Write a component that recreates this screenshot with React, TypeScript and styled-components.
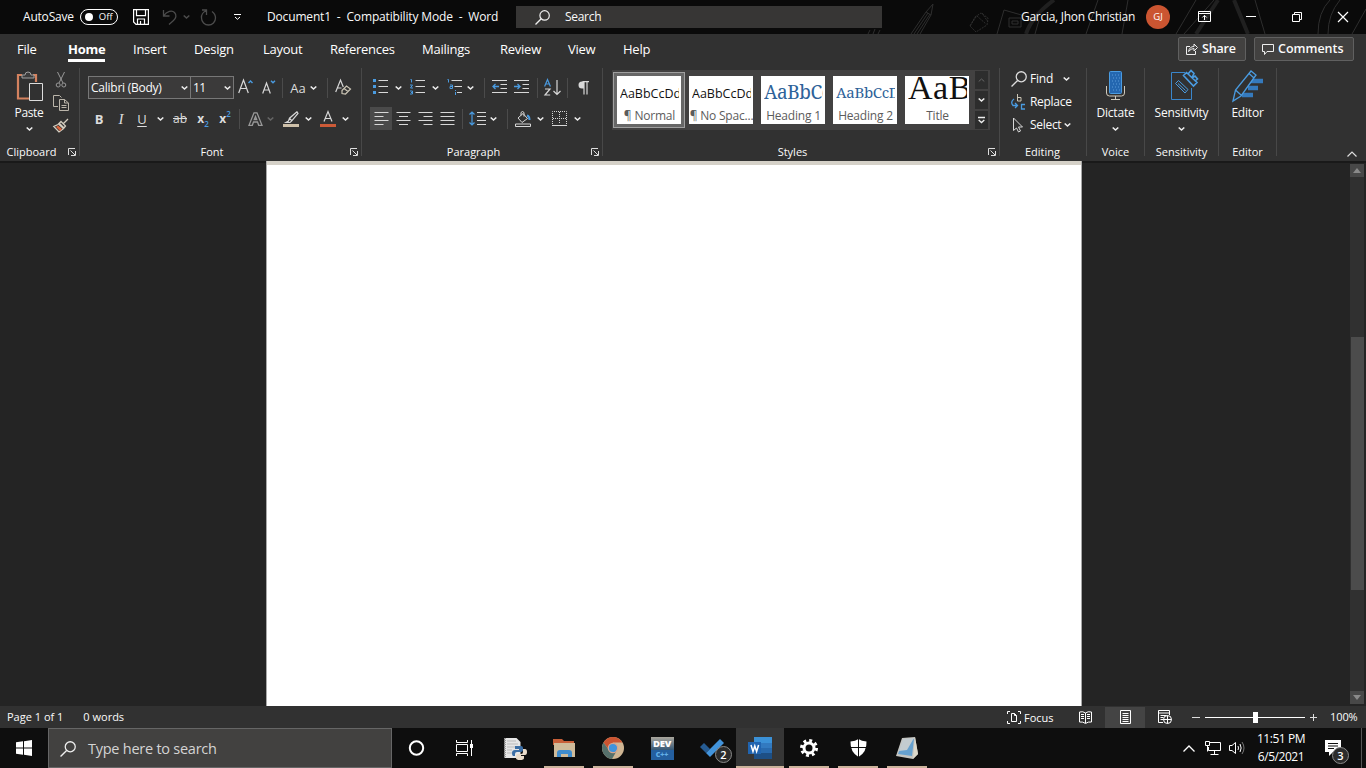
import React from 'react';
import styled, { createGlobalStyle } from 'styled-components';

const GlobalStyle = createGlobalStyle`
    * {
        box-sizing: border-box;
    }

    body {
        margin: 0;
        overflow: hidden;
        background: #242424;
        color: #fff;
        font-family: "Open Sans", "Noto Sans", sans-serif;
        font-size: 12px;
    }
`;

const Screen = styled.div`
    display: flex;
    flex-direction: column;
    width: 1366px;
    height: 768px;
`;

const Label = styled.span<{ $size?: number; $spacing?: number; $gap?: number; $weight?: number; $color?: string }>`
    flex: none;
    white-space: pre;
    line-height: 16px;
    font-size: ${p => p.$size ?? 12}px;
    font-weight: ${p => p.$weight ?? 400};
    letter-spacing: ${p => p.$spacing ?? 0}px;
    margin-left: ${p => p.$gap ?? 0}px;
    color: ${p => p.$color ?? '#fafafa'};
`;

const Cell = styled.div<{ $w: number; $gap?: number; $active?: boolean }>`
    flex: none;
    display: flex;
    align-items: center;
    justify-content: center;
    width: ${p => p.$w}px;
    height: 23px;
    margin-left: ${p => p.$gap ?? 0}px;
    background: ${p => (p.$active ? '#4a4a4a' : 'transparent')};
`;

const Divider = styled.div<{ $gap: number }>`
    flex: none;
    width: 1px;
    height: 20px;
    margin-left: ${p => p.$gap}px;
    background: #4b4b4b;
`;

const Svg = styled.svg`
    display: block;
    flex: none;
    fill: none;
    stroke: #d8d8d8;
    overflow: visible;
`;

type IconProps = {
    w: number;
    h: number;
    children: React.ReactNode;
}

const Icon: React.FC<IconProps> = ({ w, h, children }) => (
    <Svg width={w} height={h} viewBox={`0 0 ${w} ${h}`}>{children}</Svg>
);

const Chevron: React.FC<{ color?: string }> = ({ color = '#eee' }) => (
    <Icon w={7} h={4}>
        <path d="M.7.5 3.5 3 6.300.5" stroke={color} strokeWidth="1.6" />
    </Icon>
);

/* ---------- title bar ---------- */

const TitleBar = styled.header`
    position: relative;
    display: flex;
    align-items: center;
    height: 34px;
    padding-bottom: 1px;
    background: #0a0a0a;
`;

const Doodles = styled.svg`
    position: absolute;
    right: 0;
    top: 0;
    fill: none;
    stroke: #2e2e2e;
`;

const TitleGroup = styled.div<{ $w: number; $left?: number }>`
    position: relative;
    flex: none;
    display: flex;
    align-items: center;
    width: ${p => p.$w}px;
    height: 100%;
    padding-left: ${p => p.$left ?? 0}px;
`;

const Toggle = styled.div`
    display: flex;
    align-items: center;
    width: 38px;
    height: 16px;
    padding-left: 4px;
    border: 1px solid #fff;
    border-radius: 8px;
`;

const Knob = styled.div`
    width: 8px;
    height: 8px;
    border-radius: 50%;
    background: #fff;
`;

const SearchBox = styled.div`
    position: relative;
    flex: none;
    display: flex;
    align-items: center;
    width: 366px;
    height: 22px;
    padding-left: 19px;
    margin-top: 1px;
    background: #373635;
`;

const Avatar = styled.div`
    display: flex;
    align-items: center;
    justify-content: center;
    width: 24px;
    height: 24px;
    margin-left: 11px;
    border-radius: 50%;
    background: #cb5531;
    font-size: 9.5px;
`;

/* ---------- tabs ---------- */

const TabBar = styled.nav`
    display: flex;
    height: 32px;
    padding-left: 17px;
    background: #313131;
`;

const TabSlot = styled.div<{ $w: number }>`
    flex: none;
    width: ${p => p.$w}px;
    padding-top: 7px;
`;

const Tab = styled.div<{ $active?: boolean }>`
    display: inline-block;
    height: 21px;
    line-height: 17px;
    font-size: 13px;
    letter-spacing: -0.25px;
    font-weight: ${p => (p.$active ? 700 : 400)};
    border-bottom: 3px solid ${p => (p.$active ? '#fff' : 'transparent')};
`;

const TabActions = styled.div`
    display: flex;
    gap: 8px;
    margin: 3px 12px 0 auto;
`;

const ActionButton = styled.div<{ $w: number }>`
    display: flex;
    align-items: center;
    width: ${p => p.$w}px;
    height: 24px;
    padding-left: 7px;
    border: 1px solid #606060;
    border-radius: 2px;
    background: #424140;
`;

/* ---------- ribbon ---------- */

const Ribbon = styled.section`
    display: flex;
    height: 95px;
    background: #313131;
`;

const Group = styled.div<{ $w: number }>`
    position: relative;
    flex: none;
    display: flex;
    flex-direction: column;
    width: ${p => p.$w}px;

    &::after {
        content: '';
        position: absolute;
        right: 0;
        top: 2px;
        width: 1px;
        height: 88px;
        background: #484848;
    }
`;

const GroupBody = styled.div`
    height: 78px;
`;

const GroupFooter = styled.div<{ $right?: number }>`
    display: flex;
    align-items: center;
    justify-content: center;
    height: 16px;
    padding-right: ${p => p.$right ?? 0}px;
`;

const Launcher = styled.div<{ $right: number }>`
    position: absolute;
    right: ${p => p.$right}px;
    bottom: 5px;
`;

const ToolRow = styled.div<{ $top: number; $left: number }>`
    display: flex;
    align-items: center;
    height: 23px;
    margin-top: ${p => p.$top}px;
    padding-left: ${p => p.$left}px;
`;

const Combo = styled.div<{ $w: number }>`
    flex: none;
    display: flex;
    align-items: center;
    justify-content: space-between;
    width: ${p => p.$w}px;
    height: 23px;
    padding: 0 2px;
    border: 1px solid #777;
    background: #3b3a3a;

    & + & {
        border-left: 0;
    }
`;

const Glyph = styled.span<{ $size: number; $weight?: number; $italic?: boolean; $line?: string; $serif?: boolean }>`
    font-family: ${p => (p.$serif ? '"Liberation Serif", serif' : '"Open Sans", sans-serif')};
    font-size: ${p => p.$size}px;
    line-height: 20px;
    font-weight: ${p => p.$weight ?? 400};
    font-style: ${p => (p.$italic ? 'italic' : 'normal')};
    text-decoration: ${p => p.$line ?? 'none'};
    text-underline-offset: 2px;
    color: #dcdcdc;
    white-space: nowrap;
`;

const Mini = styled.span<{ $shift: number }>`
    position: relative;
    top: ${p => p.$shift}px;
    font-size: 8px;
    line-height: 8px;
    font-weight: 600;
    color: #4a9be0;
`;

const Columns = styled.div`
    display: flex;
    padding-left: 8px;
`;

const Column = styled.div<{ $w: number; $top?: number; $gap?: number }>`
    flex: none;
    display: flex;
    flex-direction: column;
    align-items: center;
    width: ${p => p.$w}px;
    padding-top: ${p => p.$top ?? 0}px;
    gap: ${p => p.$gap ?? 0}px;
`;

const BigButton = styled.div<{ $right?: number }>`
    display: flex;
    flex-direction: column;
    align-items: center;
    padding: 4px ${p => p.$right ?? 0}px 0 0;
`;

const BigIcon = styled.div<{ $h?: number }>`
    display: flex;
    justify-content: center;
    height: ${p => p.$h ?? 35}px;
`;

const BigChevron = styled.div`
    margin-top: 6px;
`;

const Gallery = styled.div`
    display: flex;
    width: 378px;
    height: 60px;
    margin: 4px 0 0 9px;
    background: #424141;
`;

const StyleCard = styled.div<{ $active?: boolean }>`
    flex: none;
    display: flex;
    width: 72px;
    height: 56px;
    margin-top: 2px;
    padding: 3px;
    border: 1px solid ${p => (p.$active ? '#a0a0a0' : 'transparent')};
    background: ${p => (p.$active ? '#676767' : 'transparent')};

    &:first-child {
        margin-left: 1px;
    }
`;

const CardFace = styled.div`
    display: flex;
    flex-direction: column;
    width: 64px;
    height: 48px;
    padding: 1px 2px 0 3px;
    background: #fff;
`;

const Sample = styled.div<{ $size: number; $font: string; $color: string; $line: number; $spacing: number }>`
    height: 32px;
    overflow: hidden;
    white-space: nowrap;
    color: ${p => p.$color};
    font-family: ${p => p.$font};
    font-size: ${p => p.$size}px;
    line-height: ${p => p.$line}px;
    letter-spacing: ${p => p.$spacing}px;
`;

const CardName = styled.div`
    margin: 0 -3px;
    text-align: center;
    font-size: 12px;
    line-height: 17px;
    letter-spacing: -0.2px;
    white-space: nowrap;
    color: #5c5c5c;
`;

const GalleryNav = styled.div`
    display: flex;
    flex-direction: column;
    justify-content: space-between;
    width: 13px;
    margin-left: 2px;
    padding: 1px 0;
`;

const NavButton = styled.div`
    display: flex;
    align-items: center;
    justify-content: center;
    height: 18px;
    background: #2d2d2d;
`;

const MenuList = styled.div`
    padding-top: 1px;
`;

const MenuLine = styled.div`
    display: flex;
    align-items: center;
    height: 23px;
    padding-left: 11px;
`;

const IconSlot = styled.div<{ $w: number }>`
    flex: none;
    width: ${p => p.$w}px;
`;

const Collapse = styled.div`
    align-self: flex-end;
    margin: 0 9px 4px auto;
`;

/* ---------- document ---------- */

const Workspace = styled.main`
    display: flex;
    height: 545px;
    padding-left: 266px;
    background: linear-gradient(#191919, #191919) top / 100% 2px no-repeat #242424;
`;

const Page = styled.div`
    width: 816px;
    border: solid #a8a8a8;
    border-width: 0 1px;
    background: #fff;

    &::before {
        content: '';
        display: block;
        height: 4px;
        background: #d5d1c8;
    }
`;

const Scrollbar = styled.div`
    display: flex;
    flex-direction: column;
    align-items: center;
    width: 14px;
    margin: 3px 2px 2px auto;
    background: #303030;
`;

const ScrollButton = styled.div`
    display: flex;
    align-items: center;
    justify-content: center;
    width: 14px;
    height: 13px;
    background: #484848;
`;

const Thumb = styled.div`
    width: 13px;
    height: 253px;
    margin: 160px 0 auto;
    background: #4c4c4c;
`;

/* ---------- status bar ---------- */

const StatusBar = styled.footer`
    display: flex;
    align-items: center;
    height: 22px;
    padding-left: 7px;
    background: #313131;
`;

const StatusTools = styled.div`
    display: flex;
    align-items: center;
    width: 359px;
    height: 22px;
    margin-left: auto;
`;

const FocusText = styled.div`
    flex: none;
    width: 44px;
    padding: 1px 0 0 3px;
    font-size: 11px;
    line-height: 16px;
`;

const ViewButton = styled.div<{ $active?: boolean }>`
    flex: none;
    display: flex;
    align-items: center;
    justify-content: center;
    width: 40px;
    height: 21px;
    background: ${p => (p.$active ? '#444' : 'transparent')};
`;

const Slider = styled.div`
    flex: none;
    display: flex;
    align-items: center;
    justify-content: center;
    width: 100px;
    height: 13px;
    margin: 0 5px;
    background: linear-gradient(#fff, #fff) center / 100% 1px no-repeat;
`;

const SliderThumb = styled.div`
    width: 5px;
    height: 11px;
    background: #fff;
`;

/* ---------- task bar ---------- */

const TaskBar = styled.div`
    display: flex;
    height: 40px;
    background: #0e0e0e;
`;

const Start = styled.div`
    display: flex;
    align-items: center;
    justify-content: center;
    width: 48px;
`;

const TaskSearch = styled.div`
    display: flex;
    align-items: center;
    width: 344px;
    margin-right: 1px;
    padding: 1px 0 0 11px;
    border: 1px solid #666;
    background: #424140;
`;

const TaskItem = styled.div<{ $open?: boolean; $active?: boolean }>`
    position: relative;
    display: flex;
    align-items: center;
    justify-content: center;
    width: 48px;
    height: 40px;
    margin-right: 1px;
    background: ${p => (p.$active ? '#363636' : 'transparent')};

    &::after {
        content: '';
        display: ${p => (p.$open ? 'block' : 'none')};
        position: absolute;
        bottom: 0;
        width: ${p => (p.$active ? 48 : 40)}px;
        height: 2px;
        background: #cbb39b;
    }
`;

const Badge = styled.div<{ $x: number; $y: number }>`
    position: absolute;
    left: ${p => p.$x}px;
    top: ${p => p.$y}px;
    width: 17px;
    height: 17px;
    border: 1px solid #8a8a8a;
    border-radius: 50%;
    background: #2c2c2c;
    text-align: center;
    font-size: 11px;
    font-weight: 600;
    line-height: 15px;
`;

const DevLogo = styled.div`
    display: flex;
    flex-direction: column;
    width: 23px;
    height: 23px;
    background: #245f9f;
    text-align: center;
    font-weight: 800;
`;

const DevTop = styled.div`
    height: 13px;
    font-size: 9.5px;
    line-height: 13px;
    letter-spacing: -0.2px;
    background: linear-gradient(#aaa69c, #345775);
`;

const DevBottom = styled.div`
    font-size: 7px;
    line-height: 10px;
    color: #62afe8;
`;

const Tray = styled.div`
    display: flex;
    align-items: center;
    width: 183px;
    margin-left: auto;
`;

const Clock = styled.div`
    width: 56px;
    margin-left: 8px;
    text-align: center;
    font-size: 12px;
    line-height: 18px;
    letter-spacing: -0.45px;
    white-space: nowrap;
`;

const Notice = styled.div`
    position: relative;
    width: 17px;
    margin-left: 16px;
`;

const Edge = styled.div`
    width: 1px;
    height: 40px;
    margin-left: 19px;
    background: #555;
`;

const Magnifier: React.FC<{ size?: number; color?: string }> = ({ size = 15, color = '#eee' }) => (
    <Svg width={size} height={size} viewBox="0 0 15 15">
        <circle cx="9.600" cy="5.400" r="4.700" stroke={color} strokeWidth="1.200" />
        <path d="M6.200 8.800.5 14.500" stroke={color} strokeWidth="1.300" />
    </Svg>
);

const LauncherIcon: React.FC<{ right: number }> = ({ right }) => (
    <Launcher $right={right}>
        <Icon w={8} h={8}>
            <path d="M.5 7V.5H7M2.500 2.500l4.500 4.500M7.500 3v4.500H3" stroke="#ddd" />
        </Icon>
    </Launcher>
);

const BLUE = '#4a9be0';

type TabItem = {
    title: string;
    width: number;
}

const tabs: TabItem[] = [
    { title: 'File', width: 51 },
    { title: 'Home', width: 65 },
    { title: 'Insert', width: 61 },
    { title: 'Design', width: 69 },
    { title: 'Layout', width: 67 },
    { title: 'References', width: 92 },
    { title: 'Mailings', width: 78 },
    { title: 'Review', width: 68 },
    { title: 'View', width: 55 },
    { title: 'Help', width: 60 },
];

const sans = '"Open Sans", sans-serif';
const serif = '"Noto Serif", "DejaVu Serif Condensed", "Liberation Serif", serif';

const styleCards = [
    { name: '¶ Normal', sample: 'AaBbCcDd', size: 12.5, font: sans, color: '#111', line: 33, spacing: 0 },
    { name: '¶ No Spac...', sample: 'AaBbCcDd', size: 12.5, font: sans, color: '#111', line: 33, spacing: 0 },
    { name: 'Heading 1', sample: 'AaBbCc', size: 19, font: serif, color: '#2e6299', line: 31, spacing: -0.4 },
    { name: 'Heading 2', sample: 'AaBbCcD', size: 15, font: serif, color: '#2e6299', line: 31, spacing: -0.3 },
    { name: 'Title', sample: 'AaBb', size: 34, font: '"Liberation Serif", serif', color: '#111', line: 22, spacing: 0.5 },
];

const Title: React.FC = () => (
    <TitleBar>
        <Doodles width={510} height={34} viewBox="856 0 510 34">
            <path d="M868 34l2-4M873 34l2-5M878 34l2-4" />
            <path d="M911 34 926 12 933 4 931 15 920 34M926 12l5 3M914 34l14-21M917 34l13-20" />
            <path d="m975 17 6-4 7 5-1 7-11 7-6-6zM977 16l9 8M970 26l6-9M982 13l6 9" strokeDasharray="2 1" />
            <path d="M997 34l7-24 35 10-4 14M1009 18h12v9h-12zM1012 21h6v3h-6z" />
            <path d="M1086 34 1098 0M1122 34l6-34M1176 34l20-34M1184 34l30-34M1265 34l-10-34M1318 34q0-22 12-34M1328 34q0-20 12-34M1352 34l14-25" />
            <path d="M1026 34q6-18 28-34M1196 34l22-34M1234 0l14 34" strokeWidth="4" stroke="#202020" />
        </Doodles>
        <TitleGroup $w={267} $left={23}>
            <Label $size={12} $spacing={-0.2}>AutoSave</Label>
            <Cell $w={38} $gap={6}>
                <Toggle>
                    <Knob />
                    <Label $size={9.500} $gap={6}>Off</Label>
                </Toggle>
            </Cell>
            <Cell $w={16} $gap={15}>
                <Icon w={16} h={15}>
                    <path d="M.6.6h14.800v14.800H3L.6 13zM3.500.6v6h9v-6M4.500 15v-5h7v5M7.500 15v-3" stroke="#fff" strokeWidth="1.200" />
                </Icon>
            </Cell>
            <Cell $w={16} $gap={13}>
                <Icon w={16} h={16}>
                    <path d="M1.500 1v6h6M1.500 7C5 2 10 1 12.500 3.500s1.500 6-1 8L7 15.500" stroke="#4c4c4c" strokeWidth="1.300" />
                </Icon>
            </Cell>
            <Cell $w={7} $gap={5}><Chevron color="#4c4c4c" /></Cell>
            <Cell $w={17} $gap={11}>
                <Icon w={19} h={15}>
                    <path d="M2 1h4.500V6M6.500 1.500Q1 4 1.500 9a7 7 0 0 0 14 0q0-4-3.500-6.500" stroke="#4c4c4c" strokeWidth="1.300" />
                </Icon>
            </Cell>
            <Cell $w={7} $gap={16}>
                <Icon w={7} h={6}>
                    <path d="M0 .5h7M1 3l2.500 2.300L6 3" stroke="#fff" />
                </Icon>
            </Cell>
        </TitleGroup>
        <TitleGroup $w={249}>
            <Label $size={12} $spacing={-0.16}>Document1  -  Compatibility Mode  -  Word</Label>
        </TitleGroup>
        <SearchBox>
            <Magnifier />
            <Label $size={12} $gap={15} $spacing={-0.3}>Search</Label>
        </SearchBox>
        <TitleGroup $w={484} $left={139}>
            <Label $size={12} $spacing={-0.28}>Garcia, Jhon Christian</Label>
            <Avatar>GJ</Avatar>
            <Cell $w={13} $gap={28}>
                <Icon w={13} h={11}>
                    <path d="M.5.5h12v10H.500zM.5 2.500h12M6.500 9V4.500M4.300 6.500l2.200-2.200 2.200 2.200" stroke="#fff" />
                </Icon>
            </Cell>
            <Cell $w={10} $gap={35}>
                <Icon w={10} h={1}><path d="M0 .5h10" stroke="#fff" /></Icon>
            </Cell>
            <Cell $w={10} $gap={36}>
                <Icon w={10} h={10}>
                    <path d="M.5 2.500h7v7h-7zM2.500 2.500v-2h7v7h-2" stroke="#fff" />
                </Icon>
            </Cell>
            <Cell $w={10} $gap={36}>
                <Icon w={10} h={10}><path d="m0 0 10 10M10 0 0 10" stroke="#fff" strokeWidth="1.200" /></Icon>
            </Cell>
        </TitleGroup>
    </TitleBar>
);

const Tabs: React.FC = () => (
    <TabBar>
        {tabs.map(({ title, width }) => (
            <TabSlot key={title} $w={width}>
                <Tab $active={title === 'Home'}>{title}</Tab>
            </TabSlot>
        ))}
        <TabActions>
            <ActionButton $w={68}>
                <Icon w={12} h={12}>
                    <path d="M4 3.500H.5v8h9V8M2.500 8.500q1-5 5.500-5V1l3.500 3.500L8 8V5.500Q5 5.500 2.500 8.500z" stroke="#eee" />
                </Icon>
                <Label $size={12.500} $weight={600} $gap={4} $spacing={-0.15}>Share</Label>
            </ActionButton>
            <ActionButton $w={100}>
                <Icon w={12} h={11}>
                    <path d="M.5.5h11v7H5l-2.500 3v-3h-2z" stroke="#eee" />
                </Icon>
                <Label $size={12.500} $weight={600} $gap={4} $spacing={0}>Comments</Label>
            </ActionButton>
        </TabActions>
    </TabBar>
);

const ClipboardGroup: React.FC = () => (
    <Group $w={80}>
        <GroupBody>
            <Columns>
                <Column $w={42} $top={2}>
                    <BigButton>
                        <BigIcon $h={33}>
                            <Icon w={24} h={31}>
                                <path d="M5 3H1v23.500h11M16 3h3v7" stroke="#d4825f" strokeWidth="2.200" />
                                <path d="M5 6V3h3q0-3 3-3t3 3h3v3z" stroke="#a0a0a0" fill="#3c3c3c" />
                                <path d="M12.500 11.500h13v17h-13z" stroke="#ddd" fill="#313131" />
                            </Icon>
                        </BigIcon>
                        <Label $size={12} $spacing={-0.35}>Paste</Label>
                        <BigChevron><Chevron /></BigChevron>
                    </BigButton>
                </Column>
                <Column $w={22} $top={6} $gap={7}>
                    <Icon w={10} h={16}>
                        <path d="M1.500 0 7 11M8.500 0 3 11" stroke="#999" />
                        <circle cx="2.200" cy="13" r="2" stroke="#999" />
                        <circle cx="7.800" cy="13" r="2" stroke="#999" />
                    </Icon>
                    <Icon w={16} h={16}>
                        <path d="M5 11.500H.5V.5h6l2 2M6.500 4.500h5l4 3.500v7.500h-9zM11.500 4.500V8h4M8.500 10.500h5M8.500 12.500h5" stroke="#bbb5aa" />
                    </Icon>
                    <Icon w={16} h={15}>
                        <path d="m15 1-5 5M6 5l5 5M8 3.500l4.500 4.500-2 2.500L5.500 6zM5 6.500.8 8.500 6 14l4-3" stroke="#d5cec0" strokeWidth="1.300" />
                        <path d="m3 9 4 4 2-2-4-3.500z" fill="#d9633b" stroke="none" />
                    </Icon>
                </Column>
            </Columns>
        </GroupBody>
        <GroupFooter $right={17}><Label $size={11} $weight={500}>Clipboard</Label></GroupFooter>
        <LauncherIcon right={4} />
    </Group>
);

const FontGroup: React.FC = () => (
    <Group $w={282}>
        <GroupBody>
            <ToolRow $top={10} $left={8}>
                <Combo $w={103}>
                    <Label $size={12} $spacing={-0.25}>Calibri (Body)</Label>
                    <Chevron />
                </Combo>
                <Combo $w={43}>
                    <Label $size={12} $spacing={-0.6}>11</Label>
                    <Chevron />
                </Combo>
                <Cell $w={15} $gap={4}>
                    <Icon w={15} h={17}>
                        <path d="m.7 14 4.800-13L10.300 14M2.300 9.500h6.400" strokeWidth="1.200" />
                        <path d="m10.500 4 2-2 2 2" stroke={BLUE} strokeWidth="1.400" />
                    </Icon>
                </Cell>
                <Cell $w={15} $gap={8}>
                    <Icon w={14} h={16}>
                        <path d="m.7 13.500 3.800-10.500 3.800 10.500M2 10h5.200" strokeWidth="1.200" />
                        <path d="m9 .8 2 2 2-2" stroke={BLUE} strokeWidth="1.400" />
                    </Icon>
                </Cell>
                <Divider $gap={6} />
                <Cell $w={18} $gap={6}><Glyph $size={13}>Aa</Glyph></Cell>
                <Cell $w={7} $gap={3}><Chevron /></Cell>
                <Divider $gap={10} />
                <Cell $w={16} $gap={7}>
                    <Icon w={16} h={17}>
                        <path d="m.7 13 4.800-12 2.800 7M2.500 9h4" strokeWidth="1.200" />
                        <path d="m7 11.500 4.500-4.500 4 3-5 5-3.500-.5zM9 9.500l4 3" stroke="#cbc5b5" strokeWidth="1.200" />
                    </Icon>
                </Cell>
            </ToolRow>
            <ToolRow $top={8} $left={8}>
                <Cell $w={22}><Glyph $size={13} $weight={700}>B</Glyph></Cell>
                <Cell $w={22}><Glyph $size={15} $italic $serif>I</Glyph></Cell>
                <Cell $w={20}><Glyph $size={13} $line="underline">U</Glyph></Cell>
                <Cell $w={16}><Chevron /></Cell>
                <Cell $w={24}><Glyph $size={12} $line="line-through">ab</Glyph></Cell>
                <Cell $w={22}><Glyph $size={12} $weight={700}>x</Glyph><Mini $shift={5}>2</Mini></Cell>
                <Cell $w={22}><Glyph $size={12} $weight={700}>x</Glyph><Mini $shift={-5}>2</Mini></Cell>
                <Divider $gap={3} />
                <Cell $w={15} $gap={8}>
                    <Icon w={15} h={14}>
                        <path d="M6 .8h3l5 12.500h-3.300L9.500 10h-4l-1.200 3.300H1zM7.500 4.500l-1.200 3h2.400z" stroke="#9a9a9a" strokeWidth="1.300" />
                    </Icon>
                </Cell>
                <Cell $w={7} $gap={4}><Chevron color="#666" /></Cell>
                <Cell $w={16} $gap={9}>
                    <Icon w={16} h={16}>
                        <path d="M0 13h16v3H0z" fill="#cdbfa8" stroke="none" />
                        <path d="m14 .8-7.500 6.400-1 2.800L3 11.500h4l1.500-1.300L15 2.500zM6.500 7.200 9 10" strokeWidth="1.200" />
                    </Icon>
                </Cell>
                <Cell $w={7} $gap={6}><Chevron /></Cell>
                <Cell $w={16} $gap={8}>
                    <Icon w={16} h={16}>
                        <path d="M0 13h16v3H0z" fill="#cc5a37" stroke="none" />
                        <path d="m4 10.500 4-10 4 10M5.300 7.500h5.400" strokeWidth="1.200" />
                    </Icon>
                </Cell>
                <Cell $w={7} $gap={6}><Chevron /></Cell>
            </ToolRow>
        </GroupBody>
        <GroupFooter $right={18}><Label $size={11} $weight={500}>Font</Label></GroupFooter>
        <LauncherIcon right={4} />
    </Group>
);

const alignPaths = [
    'M.5 1.500h14M.5 5.500h9M.5 9.500h14M.5 13.500h9',
    'M.5 1.500h14M3 5.500h9M.5 9.500h14M3 13.500h9',
    'M.5 1.500h14M5.500 5.500h9M.5 9.500h14M5.500 13.500h9',
    'M.5 1.500h14M.5 5.500h14M.5 9.500h14M.5 13.500h14',
];

const ParagraphGroup: React.FC = () => (
    <Group $w={241}>
        <GroupBody>
            <ToolRow $top={10} $left={11}>
                <Cell $w={15}>
                    <Icon w={15} h={17}>
                        <path d="M5.500 1.500H15M5.500 7.500H15M5.500 13.500H15" />
                        <path d="M0 0h3v3H0zM0 6h3v3H0zM0 12h3v3H0z" fill={BLUE} stroke="none" />
                    </Icon>
                </Cell>
                <Cell $w={7} $gap={7}><Chevron /></Cell>
                <Cell $w={15} $gap={8}>
                    <Icon w={15} h={17}>
                        <path d="M5.500 1.500H15M5.500 7.500H15M5.500 13.500H15" />
                        <path d="M.5.5h1v3M0 6h2.500l-2 3H3M0 12h2.500v3H0M1 13.500h1" stroke={BLUE} />
                    </Icon>
                </Cell>
                <Cell $w={7} $gap={7}><Chevron /></Cell>
                <Cell $w={15} $gap={8}>
                    <Icon w={15} h={17}>
                        <path d="M4.500 1.500H15M7.500 7.500H15M10 13.500h5" />
                        <path d="M.5.5h1v3M3 6h2.500v3.500H3v-2h2.500M8.500 11v1M8.500 13v3" stroke={BLUE} />
                    </Icon>
                </Cell>
                <Cell $w={7} $gap={5}><Chevron /></Cell>
                <Divider $gap={10} />
                <Cell $w={15} $gap={7}>
                    <Icon w={15} h={17}>
                        <path d="M0 1.500h15M8.500 5.500H15M8.500 9.500H15M0 13.500h15" />
                        <path d="M7 7.500H1M3.500 5 1 7.500 3.500 10" stroke={BLUE} strokeWidth="1.300" />
                    </Icon>
                </Cell>
                <Cell $w={15} $gap={7}>
                    <Icon w={15} h={17}>
                        <path d="M0 1.500h15M8.500 5.500H15M8.500 9.500H15M0 13.500h15" />
                        <path d="M0 7.500h6M3.500 5 6 7.500 3.500 10" stroke={BLUE} strokeWidth="1.300" />
                    </Icon>
                </Cell>
                <Divider $gap={8} />
                <Cell $w={17} $gap={6}>
                    <Icon w={17} h={17}>
                        <path d="m.6 7.500 2.900-7 2.900 7M1.600 5h3.800" stroke={BLUE} strokeWidth="1.200" />
                        <path d="M1 10h5l-5 6h5.200M13 1v14.500M9.500 12l3.500 3.500 3.500-3.500" strokeWidth="1.200" />
                    </Icon>
                </Cell>
                <Divider $gap={6} />
                <Cell $w={11} $gap={10}>
                    <Icon w={11} h={14}>
                        <path d="M11 .6H4.500M6 .6v13M9 .6v13" strokeWidth="1.200" />
                        <path d="M6 .6H4a3.500 3.500 0 0 0 0 7h2z" fill="#d8d8d8" stroke="none" />
                    </Icon>
                </Cell>
            </ToolRow>
            <ToolRow $top={8} $left={8}>
                {alignPaths.map((d, i) => (
                    <Cell key={d} $w={22} $active={i === 0}>
                        <Icon w={14} h={15}><path d={d} /></Icon>
                    </Cell>
                ))}
                <Divider $gap={4} />
                <Cell $w={17} $gap={6}>
                    <Icon w={17} h={15}>
                        <path d="M8 1.500h9M8 5.500h9M8 9.500h9M8 13.500h9" />
                        <path d="M3 1v13M.5 3.500 3 1l2.500 2.500M.5 11.500 3 14l2.500-2.500" stroke={BLUE} strokeWidth="1.200" />
                    </Icon>
                </Cell>
                <Cell $w={7} $gap={4}><Chevron /></Cell>
                <Divider $gap={10} />
                <Cell $w={16} $gap={7}>
                    <Icon w={16} h={16}>
                        <path d="m3 7 5-4.500 4.500 5L7 11.500zM6 4.500V1.500q1.500-2 3 0v4M.5 13h15v2.500H.5z" />
                        <path d="M12 4.500q2.500.5 2.500 4.500" stroke={BLUE} strokeWidth="2" />
                    </Icon>
                </Cell>
                <Cell $w={7} $gap={6}><Chevron /></Cell>
                <Cell $w={15} $gap={8}>
                    <Icon w={15} h={15}>
                        <path d="M.5 13V.5h14V13M7.500 1v12M1 7.500h13" strokeDasharray="1 1" />
                        <path d="M0 14.500h15" />
                    </Icon>
                </Cell>
                <Cell $w={7} $gap={7}><Chevron /></Cell>
            </ToolRow>
        </GroupBody>
        <GroupFooter $right={18}><Label $size={11} $weight={500}>Paragraph</Label></GroupFooter>
        <LauncherIcon right={4} />
    </Group>
);

const StylesGroup: React.FC = () => (
    <Group $w={397}>
        <GroupBody>
            <Gallery>
                {styleCards.map((card, i) => (
                    <StyleCard key={card.name} $active={i === 0}>
                        <CardFace>
                            <Sample $size={card.size} $font={card.font} $color={card.color} $line={card.line} $spacing={card.spacing}>
                                {card.sample}
                            </Sample>
                            <CardName>{card.name}</CardName>
                        </CardFace>
                    </StyleCard>
                ))}
                <GalleryNav>
                    <NavButton>
                        <Icon w={7} h={4}><path d="M.7 3.500 3.500 1l2.800 2.500" stroke="#666" /></Icon>
                    </NavButton>
                    <NavButton><Chevron /></NavButton>
                    <NavButton>
                        <Icon w={7} h={7}><path d="M0 .5h7M.7 3 3.500 5.600 6.300 3" stroke="#eee" strokeWidth="1.300" /></Icon>
                    </NavButton>
                </GalleryNav>
            </Gallery>
        </GroupBody>
        <GroupFooter $right={18}><Label $size={11} $weight={500}>Styles</Label></GroupFooter>
        <LauncherIcon right={4} />
    </Group>
);

const EditingGroup: React.FC = () => (
    <Group $w={87}>
        <GroupBody>
            <MenuList>
                <MenuLine>
                    <IconSlot $w={19}><Magnifier size={16} color="#ddd" /></IconSlot>
                    <Label $spacing={-0.2}>Find</Label>
                    <Cell $w={7} $gap={10}><Chevron /></Cell>
                </MenuLine>
                <MenuLine>
                    <IconSlot $w={19}>
                        <Icon w={15} h={16}>
                            <path d="M6.500 0v7h3.500V3.500H6.500" stroke="#cbc5b5" />
                            <path d="M3 5Q-1 8 2 11.500h4M4 9l2.500 2.500L4 14M14 10.500h-3.500V15H14" stroke={BLUE} strokeWidth="1.300" />
                        </Icon>
                    </IconSlot>
                    <Label $spacing={-0.3}>Replace</Label>
                </MenuLine>
                <MenuLine>
                    <IconSlot $w={19}>
                        <Icon w={13} h={16}>
                            <path d="M2.500 1v12.500L5.500 11l2 4 2-1-2-4h4z" />
                        </Icon>
                    </IconSlot>
                    <Label $spacing={-0.3}>Select</Label>
                    <Cell $w={7} $gap={3}><Chevron /></Cell>
                </MenuLine>
            </MenuList>
        </GroupBody>
        <GroupFooter $right={2}><Label $size={11} $weight={500}>Editing</Label></GroupFooter>
    </Group>
);

type BigGroupProps = {
    width: number;
    title: string;
    footer: string;
    menu?: boolean;
    children: React.ReactNode;
}

const BigGroup: React.FC<BigGroupProps> = ({ width, title, footer, menu, children }) => (
    <Group $w={width}>
        <GroupBody>
            <BigButton $right={1}>
                <BigIcon>{children}</BigIcon>
                <Label $size={12} $spacing={-0.2}>{title}</Label>
                {menu && <BigChevron><Chevron /></BigChevron>}
            </BigButton>
        </GroupBody>
        <GroupFooter $right={1}><Label $size={11} $weight={500}>{footer}</Label></GroupFooter>
    </Group>
);

const Taskbar: React.FC = () => (
    <TaskBar>
        <Start>
            <Icon w={16} h={16}>
                <path d="M0 2.300 7 1.300v6.200H0zM8 1.200 16 0v7.500H8zM0 8.500h7v6.200l-7-1zM8 8.500h8V16l-8-1.200z" fill="#fff" stroke="none" />
            </Icon>
        </Start>
        <TaskSearch>
            <Magnifier size={16} />
            <Label $size={14.500} $gap={12} $spacing={-0.25} $color="#d4d4d4">Type here to search</Label>
        </TaskSearch>
        <TaskItem>
            <Icon w={17} h={16}><circle cx="7.500" cy="8" r="6.700" stroke="#fff" strokeWidth="2" /></Icon>
        </TaskItem>
        <TaskItem>
            <Icon w={20} h={16}>
                <path d="M.5 0v2.500h11V0M.5 4.500h11v7H.5zM.5 16v-2.500h11V16M15.500 0v16" stroke="#fff" />
                <path d="M14 4h3v4h-3z" fill="#fff" stroke="none" />
            </Icon>
        </TaskItem>
        <TaskItem>
            <Icon w={23} h={23}>
                <path d="M.5 1h12l4 4v16H.5z" fill="#e6e6e6" stroke="none" />
                <path d="M3 4h9M3 7h11M3 10h8M3 13h5M3 16h5" stroke="#bbb" />
                <path d="M1 1v20" stroke="#999" strokeDasharray="1 1" strokeWidth="2" />
                <path d="M11 9h6q2 0 2 2v2q0 2-2 2h-4q-2 0-2 2v2H9q-1 0-1-3 0-3 3-3h4v-1h-4z" fill="#3b6ea5" stroke="none" />
                <path d="M19 12h2q2 0 2 3t-2 3h-4v1h3v2q0 2-4 2t-4-2v-2q0-2 2-2h3q2 0 2-2z" fill="#e9dccb" stroke="none" />
            </Icon>
        </TaskItem>
        <TaskItem $open>
            <Icon w={22} h={18}>
                <path d="M0 0h9l2 2h10v4H0z" fill="#c85f38" stroke="none" />
                <path d="M1 4h21v14H1z" fill="#cfbb9a" stroke="none" />
                <path d="M4 18v-4q0-3 3-3h9q3 0 3 3v4h-4v-3H8v3z" fill="#3f8ccd" stroke="none" />
            </Icon>
        </TaskItem>
        <TaskItem $open>
            <Icon w={22} h={22}>
                <circle cx="11" cy="11" r="11" fill="#cfb593" stroke="none" />
                <path d="M1.500 5.500a11 11 0 0 1 19 0H11L7 13z" fill="#cb5431" stroke="none" />
                <path d="M1.500 5.500A11 11 0 0 0 10 22l4-7-7-2z" fill="#56706b" stroke="none" />
                <circle cx="11" cy="11" r="4.700" fill="#3f93dc" stroke="#d8a48c" strokeWidth="1.200" />
            </Icon>
        </TaskItem>
        <TaskItem>
            <DevLogo><DevTop>DEV</DevTop><DevBottom>C++</DevBottom></DevLogo>
        </TaskItem>
        <TaskItem>
            <Icon w={25} h={20}>
                <path d="m1 9 4-4 6 6-4 4z" fill="#265c93" stroke="none" />
                <path d="m7 15 14-14 4 4L11 19z" fill="#4294dc" stroke="none" />
            </Icon>
            <Badge $x={28} $y={18}>2</Badge>
        </TaskItem>
        <TaskItem $open $active>
            <Icon w={24} h={22}>
                <path d="M6 0h18v6H6z" fill="#3b91d7" stroke="none" />
                <path d="M6 6h18v5H6z" fill="#327ac0" stroke="none" />
                <path d="M6 11h18v5H6z" fill="#286aae" stroke="none" />
                <path d="M6 16h18v6H6z" fill="#1d4f85" stroke="none" />
                <path d="M0 5h13v12H0z" fill="#2064b0" stroke="none" />
                <path d="m3 8 2 6.500 1.800-5.500 1.800 5.500 2-6.500" stroke="#fff" strokeWidth="1.500" />
            </Icon>
        </TaskItem>
        <TaskItem $open>
            <Icon w={18} h={18}>
                <circle cx="9" cy="9" r="5" stroke="#fff" strokeWidth="3" />
                <circle cx="9" cy="9" r="7.500" stroke="#fff" strokeWidth="3" strokeDasharray="2.900 2.990" />
            </Icon>
        </TaskItem>
        <TaskItem $open>
            <Icon w={17} h={18}>
                <path d="M8.500 0q3 2.300 8 2.500Q17 13 8.500 18 0 13 .5 2.500 5.500 2.300 8.500 0z" fill="#fff" stroke="none" />
                <path d="M8.500 0v18M0 8.500h17" stroke="#0e0e0e" />
            </Icon>
        </TaskItem>
        <TaskItem $open>
            <Icon w={22} h={22}>
                <path d="m6 1 13-1 3 17-5 5-17-3z" fill="#c5c5c0" stroke="none" />
                <path d="m7 4 11-2-2 17-14-2z" fill="#66a1cf" stroke="none" />
                <path d="m7 2 11-1-7 12-8 1z" fill="#c3ccd0" stroke="none" />
                <path d="m19 0 3 17-5 5z" fill="#ddd9cb" stroke="none" />
            </Icon>
        </TaskItem>
        <Tray>
            <Icon w={12} h={7}><path d="M.5 6.500 6 1l5.500 5.500" stroke="#fff" strokeWidth="1.300" /></Icon>
            <Cell $w={16} $gap={10}>
                <Icon w={16} h={14}>
                    <path d="M4.500 1.500h11v8h-12V6M9.500 10v3M5.500 13.500h8M.5.5h4v4h-4zM2.500 5v5.500" stroke="#fff" />
                </Icon>
            </Cell>
            <Cell $w={16} $gap={8}>
                <Icon w={16} h={14}>
                    <path d="M.5 4.500H3l3.500-3v11l-3.500-3H.5zM9 5q1 2 0 4M11 3q2.300 4 0 8" stroke="#fff" />
                    <path d="M13 1q4 6 0 12" stroke="#777" />
                </Icon>
            </Cell>
            <Clock>11:51 PM<br />6/5/2021</Clock>
            <Notice>
                <Icon w={17} h={16}>
                    <path d="M0 0h16v12H8l-4 4v-4H0z" fill="#fff" stroke="none" />
                    <path d="M3 3.500h10M3 6h10M3 8.500h6" stroke="#111" />
                </Icon>
                <Badge $x={7} $y={7}>3</Badge>
            </Notice>
            <Edge />
        </Tray>
    </TaskBar>
);

const App: React.FC = () => (
    <>
        <GlobalStyle />
        <Screen>
            <Title />
            <Tabs />
            <Ribbon>
                <ClipboardGroup />
                <FontGroup />
                <ParagraphGroup />
                <StylesGroup />
                <EditingGroup />
                <BigGroup width={58} title="Dictate" footer="Voice" menu>
                    <Icon w={19} h={30}>
                        <path d="M3.500 2.500q0-1 1-1h10q1 0 1 1v20q0 1-1 1h-10q-1 0-1-1z" fill="#2467b0" stroke={BLUE} />
                        <path d="M6 5h8M7 8h7M6 11h8M7 14h7M6 17h8M7 20h7" stroke="#5b9bd8" strokeDasharray="1 2" />
                        <path d="M.5 16v7q0 3 3 3h12q3 0 3-3v-7M9.500 26v3M5 29.500h9" stroke="#cfcabd" />
                    </Icon>
                </BigGroup>
                <BigGroup width={74} title="Sensitivity" footer="Sensitivity" menu>
                    <Icon w={21} h={31}>
                        <path d="M14 2.500H.500v27h20V18" stroke="#3a86cb" />
                        <path d="m4.500 13.500 3-3 9.500 9-3 3.500zM7 13.500l7.500 7" stroke={BLUE} />
                        <path d="m12.500 5.500 3-3L26 12.500 22.500 16zM17 4l3-3.500 3 3-2 4M21 8l3-2 2.500 3L24 11" stroke={BLUE} strokeWidth="1.600" />
                    </Icon>
                </BigGroup>
                <BigGroup width={58} title="Editor" footer="Editor">
                    <Icon w={31} h={32}>
                        <path d="M19 11h12M16 18h10M10 25h11" stroke="#357abd" strokeWidth="4.500" />
                        <path d="m1 31 2.500-11L19 1l5 4L9 26zM3.500 20l5.500 5M17 3.500l5 4.500" stroke={BLUE} strokeWidth="1.300" fill="#313131" />
                    </Icon>
                </BigGroup>
                <Collapse>
                    <Icon w={10} h={6}><path d="m.5 5.500 4.500-4.500 4.500 4.500" stroke="#ddd" strokeWidth="1.200" /></Icon>
                </Collapse>
            </Ribbon>
            <Workspace>
                <Page />
                <Scrollbar>
                    <ScrollButton>
                        <Icon w={8} h={5}><path d="M4 0l4 5H0z" fill="#8a8a8a" stroke="none" /></Icon>
                    </ScrollButton>
                    <Thumb />
                    <ScrollButton>
                        <Icon w={8} h={5}><path d="M4 5l4-5H0z" fill="#8a8a8a" stroke="none" /></Icon>
                    </ScrollButton>
                </Scrollbar>
            </Workspace>
            <StatusBar>
                <Label $size={11} $weight={500} $spacing={0}>Page 1 of 1</Label>
                <Label $size={11} $weight={500} $gap={20}>0 words</Label>
                <StatusTools>
                    <Icon w={14} h={13}>
                        <path d="M3 .5H.5V3M11 .5h2.500V3M3 12.500H.5V10M11 12.500h2.500V10M4.500 2.500h3l2 2v6h-5zM7.500 2.500v2h2" stroke="#fff" />
                    </Icon>
                    <FocusText>Focus</FocusText>
                    <ViewButton>
                        <Icon w={13} h={13}>
                            <path d="M6.500 2Q4 0 .5 1v10q3.500-.5 6 1.500Q9 10.500 12.500 11V1Q9 0 6.500 2zv10M2 3.500h3M2 5.500h3M2 7.500h3M8 3.500h3M8 5.500h3M8 7.500h3" stroke="#fff" />
                        </Icon>
                    </ViewButton>
                    <ViewButton $active>
                        <Icon w={11} h={14}>
                            <path d="M.5.5h10v13H.5zM2.500 3.500h6M2.500 5.500h6M2.500 7.500h6M2.500 9.500h6M2.500 11.500h6" stroke="#fff" />
                        </Icon>
                    </ViewButton>
                    <ViewButton>
                        <Icon w={14} h={14}>
                            <path d="M5 12.500H.5V.5h11V5M.5 3h11M2.500 5.500h6M2.500 7.500h3M2.500 9.500h3" stroke="#fff" />
                            <circle cx="9.500" cy="9.500" r="4" stroke="#fff" />
                            <path d="M5.500 9.500h8M9.500 5.500v8" stroke="#fff" />
                        </Icon>
                    </ViewButton>
                    <Cell $w={9} $gap={6}><Icon w={8} h={1}><path d="M0 .5h8" stroke="#ddd" /></Icon></Cell>
                    <Slider><SliderThumb /></Slider>
                    <Cell $w={7}><Icon w={7} h={7}><path d="M0 3.500h7M3.500 0v7" stroke="#ddd" /></Icon></Cell>
                    <Label $size={11} $gap={13} $spacing={-0.1}>100%</Label>
                </StatusTools>
            </StatusBar>
            <Taskbar />
        </Screen>
    </>
);

export default App;
